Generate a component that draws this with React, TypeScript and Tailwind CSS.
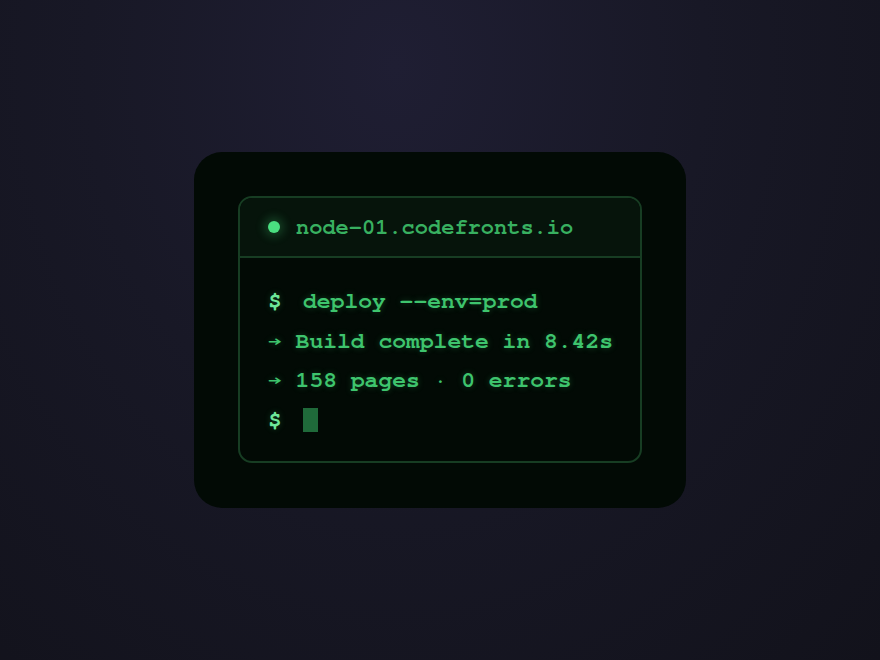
import React from "react";

export default function App() {
  const mono = { fontFamily: 'FreeMono, "Liberation Mono", monospace' };
  return (
    <div className="w-[880px] h-[660px] flex items-center justify-center bg-[radial-gradient(ellipse_at_45%_10%,#1f1e33_0%,#181826_45%,#12121b_100%)]">
      <div className="w-[492px] h-[356px] rounded-[28px] bg-[#020a05] p-[44px]" style={mono}>
        <div className="rounded-[14px] border-2 border-[#173d23] bg-[#020a05] overflow-hidden">
          <div className="h-[60px] flex items-center pl-[28px] bg-[#06140b] border-b-2 border-[#173d23]">
            <span className="w-[12px] h-[12px] rounded-full bg-[#4ade80] shadow-[0_0_10px_4px_rgba(74,222,128,0.22)]" />
            <span className="ml-[16px] text-[22px] font-bold text-[#38b060]">node-01.codefronts.io</span>
          </div>
          <div className="pl-[28px] pt-[24px] pb-[21px] text-[23px] font-bold text-[#3ec46d] leading-[39.5px] [text-shadow:0_0_6px_rgba(62,196,109,0.3)]">
            <div className="flex items-center">
              <span className="text-[#6ee79a] w-[35px]">$</span>
              <span>deploy --env=prod</span>
            </div>
            <div className="whitespace-pre">→ Build complete in 8.42s</div>
            <div className="whitespace-pre">→ 158 pages · 0 errors</div>
            <div className="flex items-center h-[39.5px]">
              <span className="text-[#6ee79a] w-[35px]">$</span>
              <span className="w-[15px] h-[24px] bg-[#1f6a3a]" />
            </div>
          </div>
        </div>
      </div>
    </div>
  );
}
